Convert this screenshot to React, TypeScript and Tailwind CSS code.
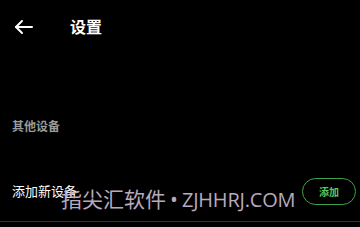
import React from "react";

export default function App() {
  return (
    <div
      className="relative w-[360px] h-[227px] bg-black overflow-hidden text-white"
      style={{ fontFamily: '"Noto Sans", "Noto Sans CJK SC", sans-serif' }}
    >
      <div className="flex items-center h-[54px] pl-[14px]">
        <svg width="20" height="16" viewBox="0 0 20 16" fill="none" stroke="white" strokeWidth="2" strokeLinecap="round" strokeLinejoin="round">
          <path d="M18 8H2" />
          <path d="M8 2L2 8l6 6" />
        </svg>
        <span className="ml-[36px] text-[16px] font-bold leading-none">设置</span>
      </div>
      <div className="mt-[67px] pl-[12px] text-[12px] font-bold text-[#9a9a9a] leading-none">其他设备</div>
      <div className="mt-[45px] flex items-center justify-between pl-[12px] pr-[4px]">
        <span className="text-[13px] leading-none">添加新设备</span>
        <button className="w-[54px] h-[27px] rounded-full border border-[#3fa34a] text-[#58c95a] text-[10px] font-bold leading-none">添加</button>
      </div>
      <div className="absolute left-0 right-0 top-[221px] h-px bg-[#3a333a]" />
      <div
        className="absolute left-[61px] top-[189px] text-[21px] leading-none text-[#b7aabd] whitespace-nowrap"
        style={{ fontFamily: '"Open Sans", "Noto Sans CJK SC", sans-serif' }}
      >
        指尖汇软件<span className="mx-[4px]">•</span><span className="text-[20px] tracking-[-0.2px]">ZJHHRJ.COM</span>
      </div>
    </div>
  );
}
